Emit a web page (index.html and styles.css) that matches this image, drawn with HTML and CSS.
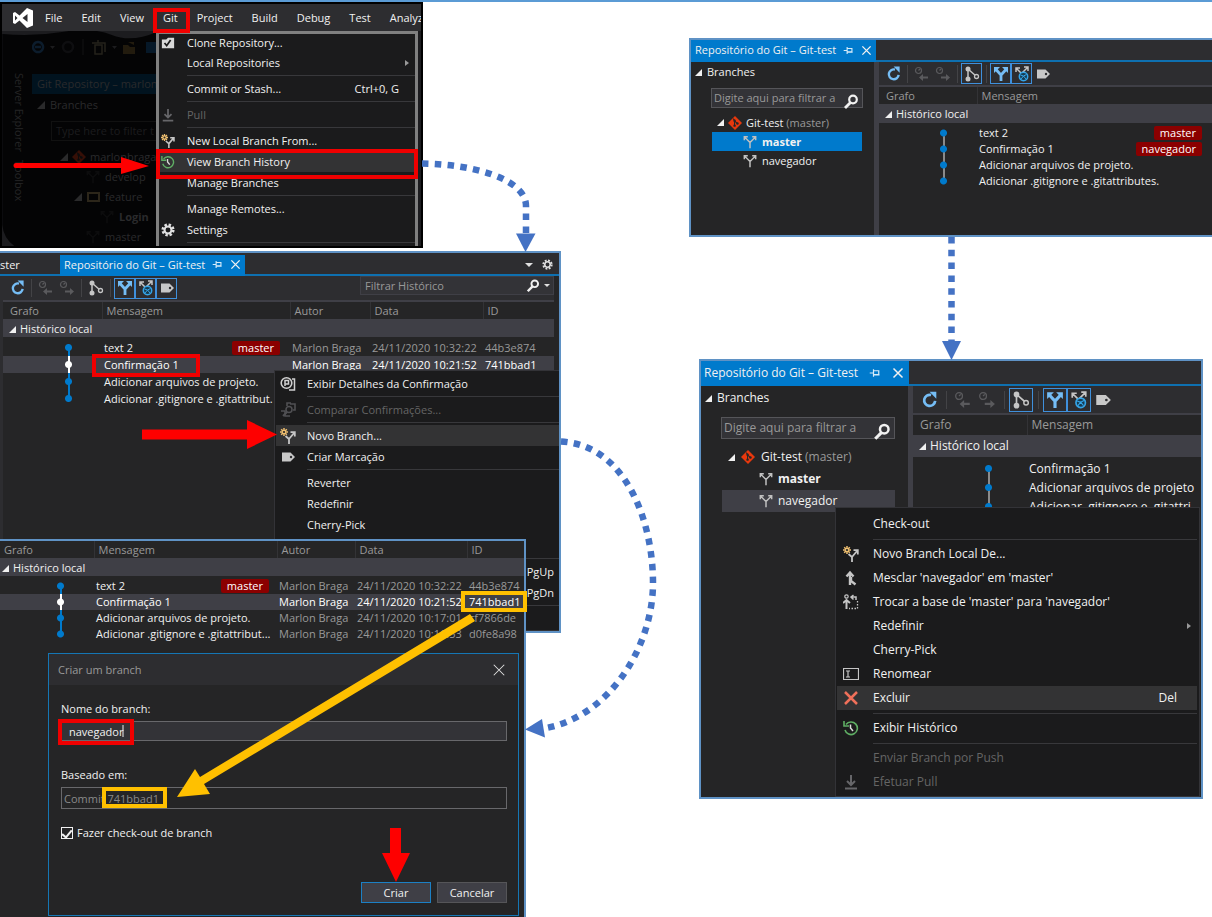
FILE: index.html
```html
<!DOCTYPE html>
<html lang="pt-BR">
<head>
<meta charset="utf-8">
<title>Git Branches</title>
<link rel="stylesheet" href="styles.css">
</head>
<body>
<svg class="defs" aria-hidden="true">
  <symbol id="refresh" viewBox="0 0 16 16"><path d="M12.6 8.8A4.9 4.9 0 1 1 9 3.6" fill="none" stroke="#75bdf5" stroke-width="2.4"/><path d="M7.6 0.6h6v6.2z" fill="#75bdf5"/></symbol>
  <symbol id="outgoing" viewBox="0 0 16 16"><g fill="none" stroke="#5a5a5d" stroke-width="1.2"><circle cx="4.5" cy="4.5" r="3"/><path d="M4.5 4.5L6 3"/></g><path d="M5 11.5L9 8v2.5h5v2H9V15z" fill="#5a5a5d"/></symbol>
  <symbol id="incoming" viewBox="0 0 16 16"><g fill="none" stroke="#5a5a5d" stroke-width="1.2"><circle cx="4.5" cy="4.5" r="3"/><path d="M4.5 4.5L6 3"/></g><path d="M15 11.5L11 8v2.5H6v2h5V15z" fill="#5a5a5d"/></symbol>
  <symbol id="graph" viewBox="0 0 16 16"><path d="M4 3v10M4 3l8 7" stroke="#c5c5c5" stroke-width="1.5"/><circle cx="4" cy="3" r="2.5" fill="#c5c5c5"/><circle cx="4" cy="13" r="2.5" fill="#c5c5c5"/><circle cx="12.5" cy="10.5" r="2" fill="#2d2d30" stroke="#c5c5c5" stroke-width="1.3"/></symbol>
  <symbol id="local" viewBox="0 0 16 16"><path d="M3 3.5l5 5.5v6M13 3.5L8 9" fill="none" stroke="#75bdf5" stroke-width="2.8"/><path d="M1 1h6L1 7zM15 1H9l6 6z" fill="#75bdf5"/></symbol>
  <symbol id="remote" viewBox="0 0 16 16"><path d="M2 6V2h4M2 2l5 5M10 1h4v4M14 1L8 7" fill="none" stroke="#c5c5c5" stroke-width="1.5"/><circle cx="9.5" cy="10.5" r="4.2" fill="#173c52" stroke="#35a5e8" stroke-width="1.5"/><path d="M6.5 9l3 1 3-1.5M7 13l2.500-3 2.500 3" stroke="#35a5e8" fill="none"/></symbol>
  <symbol id="tag" viewBox="0 0 16 16"><path d="M2 3.500h8.500L15 8l-4.500 4.500H2z" fill="#c8c8c8"/><circle cx="11" cy="8" r="1.200" fill="#2d2d30"/></symbol>
  <symbol id="pin" viewBox="0 0 16 16"><path d="M1 8h5M6 3v10M6 5h7v5H6M6 10.5h8" fill="none" stroke="#d6ecfa" stroke-width="1.6"/></symbol>
  <symbol id="close" viewBox="0 0 16 16"><path d="M2 2l12 12M14 2L2 14" stroke="currentColor" stroke-width="var(--stroke,2)"/></symbol>
  <symbol id="search" viewBox="0 0 16 16"><circle cx="10" cy="5.5" r="3.8" fill="none" stroke="#f1f1f1" stroke-width="2.2"/><path d="M7.5 8.5L2 14" stroke="#f1f1f1" stroke-width="2.8"/></symbol>
  <symbol id="gear" viewBox="0 0 16 16"><circle cx="8" cy="8" r="6" fill="none" stroke="#e0e0e0" stroke-width="3" stroke-dasharray="2.7 2.01"/><circle cx="8" cy="8" r="4" fill="none" stroke="#e0e0e0" stroke-width="2.4"/></symbol>
  <symbol id="expanded" viewBox="0 0 8 8"><path d="M8 0v8H0z" fill="#f1f1f1"/></symbol>
  <symbol id="git" viewBox="0 0 16 16"><path d="M8 0l8 8-8 8-8-8z" fill="#e8380d"/><path d="M6 3l1.5 2v6M7.500 5.500L10.500 8.500" stroke="#252526" stroke-width="1.2" fill="none"/><circle cx="7.500" cy="11" r="1.400" fill="#252526"/><circle cx="10.800" cy="8.500" r="1.400" fill="#252526"/><circle cx="7.500" cy="5.500" r="1.400" fill="#252526"/></symbol>
  <symbol id="branch" viewBox="0 0 16 16"><path d="M1.500 6V2H5.500M1.500 2L8 8.500V15M10.500 2h4v4M14.500 2L8 8.500" fill="none" stroke="currentColor" stroke-width="1.700"/></symbol>
  <symbol id="newbranch" viewBox="0 0 16 16"><path d="M4 0v8M0 4h8M1.200 1.200l5.600 5.600M6.800 1.200L1.200 6.800" stroke="#f0c070" stroke-width="1.500"/><circle cx="4" cy="4" r="1.100" fill="#252526"/><path d="M5.500 8L9 11M9 16v-5l5-6M10.500 4.200h4.300v4.300" fill="none" stroke="#c5c5c5" stroke-width="1.800"/></symbol>
  <symbol id="history" viewBox="0 0 16 16"><path d="M3 4.500A6.300 6.300 0 1 1 2 10M1 1v5h5" fill="none" stroke="#5fae64" stroke-width="1.600"/><path d="M7.500 4.500V8l2.500 3" fill="none" stroke="#dcdcdc" stroke-width="1.500"/></symbol>
  <symbol id="delete" viewBox="0 0 16 16"><path d="M2 2l12 12M14 2L2 14" stroke="#f0705a" stroke-width="2.500"/></symbol>
  <symbol id="rename" viewBox="0 0 16 16"><path d="M.5 2.500h15v11H.5zM3 5h4M3 11h4M5 5v6" fill="none" stroke="#c5c5c5" stroke-width="1.200"/></symbol>
  <symbol id="merge" viewBox="0 0 16 16"><path d="M7 15V3M3.500 6.500L7 2.500l3.500 4M12.500 14.500L8 11V7" fill="none" stroke="#c5c5c5" stroke-width="2.400"/></symbol>
  <symbol id="rebase" viewBox="0 0 16 16"><circle cx="3.500" cy="2.500" r="1.700" fill="none" stroke="#c5c5c5" stroke-width="1.200"/><path d="M3.500 15V6M0 9l3.500-3L7 9" fill="none" stroke="#c5c5c5" stroke-width="2"/><path d="M8 3h5v3M10.500 1L8 3l2.500 2.500" fill="none" stroke="#c5c5c5" stroke-width="1.500"/><path d="M14.500 7v7.500H6" fill="none" stroke="#c5c5c5" stroke-width="1.300" stroke-dasharray="1.500 1.500"/></symbol>
  <symbol id="pull" viewBox="0 0 16 16"><path d="M8 1v10M4 7l4 4 4-4M2 14.500h12" fill="none" stroke="#666669" stroke-width="2"/></symbol>
  <symbol id="clone" viewBox="0 0 16 16"><path d="M1 4h5l2-2h7v12H1z" fill="#d8d8d8"/><path d="M4 8l2.500 3L11 4.500" fill="none" stroke="#1b1b1c" stroke-width="2"/></symbol>
  <symbol id="details" viewBox="0 0 16 16"><circle cx="6.500" cy="7" r="5.300" fill="none" stroke="#d0d0d0" stroke-width="1.600"/><path d="M5 10V4.500h3.500V8H5M12 3h2.500v11H9" fill="none" stroke="#d0d0d0" stroke-width="1.500"/></symbol>
  <symbol id="compare" viewBox="0 0 16 16"><path d="M1 9h4v5h5M10 2h5v6h-2M7 4V1h4" fill="none" stroke="#505053" stroke-width="1.600"/><circle cx="9" cy="7.500" r="3" fill="none" stroke="#505053" stroke-width="1.500"/><path d="M7 10l-4 4" stroke="#505053" stroke-width="2"/></symbol>
  <symbol id="vs" viewBox="0 0 20 20"><path fill="#fff" fill-rule="evenodd" d="M14 0l6 2.500v15L14 20 6.500 12.500 2 16 0 15V5l2-1 4.500 3.500zM14.500 6L9.500 10l5 4zM2 7.500v5L4.500 10z"/></symbol>
</svg>

<main class="canvas">

  <section class="shot menu-shot" aria-label="Git menu">
    <nav class="menubar">
      <svg class="vs"><use href="#vs"/></svg>
      <button>File</button><button>Edit</button><button>View</button><button>Git</button><button>Project</button><button>Build</button><button>Debug</button><button>Test</button><button>Analyz</button>
    </nav>
    <div class="ide">
      <svg class="shade" viewBox="0 0 155 218"><path d="M0 3Q30 6 60 1T110 4T155 1V216H12Q1 208 0 195z" fill="#040405"/></svg>
      <div class="side"><span>Server Explorer</span><span>Toolbox</span></div>
      <div class="faded">
        <div class="faded-tools">
          <svg viewBox="0 0 130 16"><path d="M6 3a5 5 0 1 0 .1 0zM3 8h6" fill="none" stroke="#0c1c2c" stroke-width="2.500"/><path d="M18 7h5l-2.500 3zM80 7h5l-2.500 3z" fill="#1c1c1e"/><circle cx="36" cy="8" r="5" fill="none" stroke="#0e0e10" stroke-width="2.500"/><path d="M51 0v16" stroke="#131314"/><path d="M60 4h6v-3M63 6h7v9h-7z M66 4h7v9" fill="none" stroke="#24221b" stroke-width="1.500"/><path d="M91 6h5l2 2h5v7H91zM96 3h6v3" fill="#221b0e"/><path d="M114 3h13v11h-13z" fill="#061828"/></svg>
        </div>
        <p class="faded-tab">Git Repository – marlon</p>
        <p class="faded-head"><svg><use href="#expanded"/></svg>Branches</p>
        <p class="faded-input">Type here to filter t</p>
        <p class="lv1"><svg><use href="#expanded"/></svg><svg class="ic"><use href="#git"/></svg>marlonbraga</p>
        <p class="lv2"><svg class="ic"><use href="#branch"/></svg>develop</p>
        <p class="lv3"><svg><use href="#expanded"/></svg><i class="folder"></i>feature</p>
        <p class="lv4"><svg class="ic"><use href="#branch"/></svg><b>Login</b></p>
        <p class="lv2"><svg class="ic"><use href="#branch"/></svg>master</p>
      </div>
      <ul class="menu main-menu">
        <li><button><svg><use href="#clone"/></svg><span>Clone Repository...</span></button></li>
        <li><button><i></i><span>Local Repositories</span><b class="more"></b></button></li>
        <li class="sep"></li>
        <li><button><i></i><span>Commit or Stash...</span><kbd>Ctrl+0, G</kbd></button></li>
        <li class="sep"></li>
        <li><button disabled><svg><use href="#pull"/></svg><span>Pull</span></button></li>
        <li class="sep"></li>
        <li><button><svg><use href="#newbranch"/></svg><span>New Local Branch From...</span></button></li>
        <li><button class="hot"><svg><use href="#history"/></svg><span>View Branch History</span></button></li>
        <li><button><i></i><span>Manage Branches</span></button></li>
        <li class="sep"></li>
        <li><button><i></i><span>Manage Remotes...</span></button></li>
        <li><button><svg><use href="#gear"/></svg><span>Settings</span></button></li>
        <li class="sep"></li>
      </ul>
    </div>
  </section>

  <section class="shot history-shot" aria-label="Histórico">
    <header class="tabs">
      <span class="old-tab">ster</span>
      <div class="tab">Repositório do Git – Git-test <svg><use href="#pin"/></svg><svg><use href="#close"/></svg></div>
      <span class="tab-tools"><b class="down"></b><svg><use href="#gear"/></svg></span>
    </header>
    <div class="pane">
      <div class="toolbar">
        <button aria-label="Atualizar"><svg><use href="#refresh"/></svg></button><i></i>
        <button aria-label="Saída"><svg><use href="#outgoing"/></svg></button><button aria-label="Entrada"><svg><use href="#incoming"/></svg></button><i></i>
        <button aria-label="Grafo"><svg><use href="#graph"/></svg></button><i></i>
        <button class="on" aria-label="Locais"><svg><use href="#local"/></svg></button><button class="on" aria-label="Remotos"><svg><use href="#remote"/></svg></button><button class="on" aria-label="Marcações"><svg><use href="#tag"/></svg></button>
        <label class="hist-filter"><input type="text" placeholder="Filtrar Histórico" aria-label="Filtrar Histórico"><svg><use href="#search"/></svg><b class="down"></b></label>
      </div>
      <table class="log">
        <colgroup><col class="c1"><col class="c2"><col class="c3"><col class="c4"><col></colgroup>
        <thead><tr><th>Grafo</th><th>Mensagem</th><th>Autor</th><th>Data</th><th>ID</th></tr></thead>
        <tbody>
          <tr class="group"><td colspan="5"><svg><use href="#expanded"/></svg>Histórico local</td></tr>
          <tr><td><i class="node first"></i></td><td><div>text 2 <mark>master</mark></div></td><td>Marlon Braga</td><td>24/11/2020 10:32:22</td><td>44b3e874</td></tr>
          <tr class="sel"><td><i class="node"></i></td><td><div>Confirmação 1</div></td><td>Marlon Braga</td><td>24/11/2020 10:21:52</td><td>741bbad1</td></tr>
          <tr><td><i class="node"></i></td><td><div>Adicionar arquivos de projeto.</div></td><td></td><td></td><td></td></tr>
          <tr><td><i class="node last"></i></td><td><div>Adicionar .gitignore e .gitattribut.</div></td><td></td><td></td><td></td></tr>
        </tbody>
      </table>
    </div>
    <ul class="menu commit-menu">
      <li><button><svg><use href="#details"/></svg><span>Exibir Detalhes da Confirmação</span></button></li>
      <li class="sep"></li>
      <li><button disabled><svg><use href="#compare"/></svg><span>Comparar Confirmações...</span></button></li>
      <li class="sep"></li>
      <li><button class="hot"><svg><use href="#newbranch"/></svg><span>Novo Branch...</span></button></li>
      <li><button><svg><use href="#tag"/></svg><span>Criar Marcação</span></button></li>
      <li class="sep"></li>
      <li><button><i></i><span>Reverter</span></button></li>
      <li><button><i></i><span>Redefinir</span></button></li>
      <li><button><i></i><span>Cherry-Pick</span></button></li>
      <li class="blank"></li>
      <li class="sep"></li>
      <li><button><i></i><span></span><kbd>PgUp</kbd></button></li>
      <li><button><i></i><span></span><kbd>PgDn</kbd></button></li>
      <li class="sep"></li>
    </ul>
  </section>

  <section class="shot create-shot" aria-label="Criar um branch">
    <table class="log">
      <colgroup><col class="c1"><col class="c2"><col class="c3"><col class="c4"><col></colgroup>
      <thead><tr><th>Grafo</th><th>Mensagem</th><th>Autor</th><th>Data</th><th>ID</th></tr></thead>
      <tbody>
        <tr class="group"><td colspan="5"><svg><use href="#expanded"/></svg>Histórico local</td></tr>
        <tr><td><i class="node first"></i></td><td><div>text 2 <mark>master</mark></div></td><td>Marlon Braga</td><td>24/11/2020 10:32:22</td><td>44b3e874</td></tr>
        <tr class="sel"><td><i class="node"></i></td><td><div>Confirmação 1</div></td><td>Marlon Braga</td><td>24/11/2020 10:21:52</td><td>741bbad1</td></tr>
        <tr><td><i class="node"></i></td><td><div>Adicionar arquivos de projeto.</div></td><td>Marlon Braga</td><td>24/11/2020 10:17:01</td><td>cf7866de</td></tr>
        <tr><td><i class="node last"></i></td><td><div>Adicionar .gitignore e .gitattribut...</div></td><td>Marlon Braga</td><td>24/11/2020 10:16:53</td><td>d0fe8a98</td></tr>
      </tbody>
    </table>
    <form class="dialog">
      <header><span>Criar um branch</span><button type="button" aria-label="Fechar"><svg><use href="#close"/></svg></button></header>
      <div class="fields">
        <label for="name">Nome do branch:</label>
        <input id="name" type="text" value="navegador">
        <label for="base">Baseado em:</label>
        <input id="base" type="text" value="Commit 741bbad1" disabled>
        <label class="check"><input type="checkbox" checked>Fazer check-out de branch</label>
        <div class="actions"><button type="button" class="primary">Criar</button><button type="button">Cancelar</button></div>
      </div>
    </form>
  </section>

  <section class="shot repo-shot" aria-label="Repositório com dois branches">
    <header class="tabs">
      <div class="tab">Repositório do Git – Git-test <svg><use href="#pin"/></svg><svg><use href="#close"/></svg></div>
    </header>
    <div class="split">
      <aside>
        <h2><svg><use href="#expanded"/></svg>Branches</h2>
        <label class="filter"><input type="text" placeholder="Digite aqui para filtrar a" aria-label="Filtrar branches"><svg><use href="#search"/></svg></label>
        <ul class="tree">
          <li class="root"><svg class="tri"><use href="#expanded"/></svg><svg class="logo"><use href="#git"/></svg><span>Git-test <em>(master)</em></span></li>
          <li class="active"><svg><use href="#branch"/></svg><b>master</b></li>
          <li><svg><use href="#branch"/></svg>navegador</li>
        </ul>
      </aside>
      <div class="pane">
        <div class="toolbar">
          <button aria-label="Atualizar"><svg><use href="#refresh"/></svg></button><i></i>
          <button aria-label="Saída"><svg><use href="#outgoing"/></svg></button><button aria-label="Entrada"><svg><use href="#incoming"/></svg></button><i></i>
          <button class="on" aria-label="Grafo"><svg><use href="#graph"/></svg></button><i></i>
          <button class="on" aria-label="Locais"><svg><use href="#local"/></svg></button><button class="on" aria-label="Remotos"><svg><use href="#remote"/></svg></button><button aria-label="Marcações"><svg><use href="#tag"/></svg></button>
        </div>
        <table class="log">
          <colgroup><col class="c1"><col></colgroup>
          <thead><tr><th>Grafo</th><th>Mensagem</th></tr></thead>
          <tbody>
            <tr class="group"><td colspan="2"><svg><use href="#expanded"/></svg>Histórico local</td></tr>
            <tr><td><i class="node first"></i></td><td><div>text 2 <mark>master</mark></div></td></tr>
            <tr><td><i class="node"></i></td><td><div>Confirmação 1 <mark>navegador</mark></div></td></tr>
            <tr><td><i class="node"></i></td><td><div>Adicionar arquivos de projeto.</div></td></tr>
            <tr><td><i class="node last"></i></td><td><div>Adicionar .gitignore e .gitattributes.</div></td></tr>
          </tbody>
        </table>
      </div>
    </div>
  </section>

  <section class="shot delete-shot" aria-label="Excluir branch">
    <header class="tabs">
      <div class="tab">Repositório do Git – Git-test <svg><use href="#pin"/></svg><svg><use href="#close"/></svg></div>
    </header>
    <div class="split">
      <aside>
        <h2><svg><use href="#expanded"/></svg>Branches</h2>
        <label class="filter"><input type="text" placeholder="Digite aqui para filtrar a" aria-label="Filtrar branches"><svg><use href="#search"/></svg></label>
        <ul class="tree">
          <li class="root"><svg class="tri"><use href="#expanded"/></svg><svg class="logo"><use href="#git"/></svg><span>Git-test <em>(master)</em></span></li>
          <li><svg><use href="#branch"/></svg><b>master</b></li>
          <li class="picked"><svg><use href="#branch"/></svg>navegador</li>
        </ul>
      </aside>
      <div class="pane">
        <div class="toolbar">
          <button aria-label="Atualizar"><svg><use href="#refresh"/></svg></button><i></i>
          <button aria-label="Saída"><svg><use href="#outgoing"/></svg></button><button aria-label="Entrada"><svg><use href="#incoming"/></svg></button><i></i>
          <button class="on" aria-label="Grafo"><svg><use href="#graph"/></svg></button><i></i>
          <button class="on" aria-label="Locais"><svg><use href="#local"/></svg></button><button class="on" aria-label="Remotos"><svg><use href="#remote"/></svg></button><button aria-label="Marcações"><svg><use href="#tag"/></svg></button>
        </div>
        <table class="log">
          <colgroup><col class="c1"><col></colgroup>
          <thead><tr><th>Grafo</th><th>Mensagem</th></tr></thead>
          <tbody>
            <tr class="group"><td colspan="2"><svg><use href="#expanded"/></svg>Histórico local</td></tr>
            <tr><td><i class="node first"></i></td><td><div>Confirmação 1</div></td></tr>
            <tr><td><i class="node"></i></td><td><div>Adicionar arquivos de projeto</div></td></tr>
            <tr><td><i class="node last"></i></td><td><div>Adicionar .gitignore e .gitattri</div></td></tr>
          </tbody>
        </table>
      </div>
    </div>
    <ul class="menu branch-menu">
      <li><button><i></i><span>Check-out</span></button></li>
      <li class="sep"></li>
      <li><button><svg><use href="#newbranch"/></svg><span>Novo Branch Local De...</span></button></li>
      <li><button><svg><use href="#merge"/></svg><span>Mesclar 'navegador' em 'master'</span></button></li>
      <li><button><svg><use href="#rebase"/></svg><span>Trocar a base de 'master' para 'navegador'</span></button></li>
      <li><button><i></i><span>Redefinir</span><b class="more"></b></button></li>
      <li><button><i></i><span>Cherry-Pick</span></button></li>
      <li><button><svg><use href="#rename"/></svg><span>Renomear</span></button></li>
      <li><button class="hot"><svg><use href="#delete"/></svg><span>Excluir</span><kbd>Del</kbd></button></li>
      <li class="sep"></li>
      <li><button><svg><use href="#history"/></svg><span>Exibir Histórico</span></button></li>
      <li class="sep"></li>
      <li><button disabled><i></i><span>Enviar Branch por Push</span></button></li>
      <li><button disabled><svg><use href="#pull"/></svg><span>Efetuar Pull</span></button></li>
    </ul>
  </section>

  <svg class="notes" width="1212" height="917" viewBox="0 0 1212 917" aria-hidden="true">
    <g fill="none" stroke="#4472c4" stroke-width="6.500" stroke-dasharray="6.500 6.300">
      <path d="M422 163.500C470 164 526 178 526 206V236"/>
      <path d="M561 441.500C625 445 653 520 653 583S610 716 546 728"/>
      <path d="M951.500 237V342"/>
    </g>
    <g fill="#4472c4"><path d="M516 233.500h19.500L525.500 252z"/><path d="M525 729.500L542 719l3 18.500z"/><path d="M942 341h19l-9.500 19z"/></g>
    <g fill="none" stroke="#f00000" stroke-width="4">
      <rect x="155" y="10" width="33" height="21"/>
      <rect x="158" y="151" width="258" height="26"/>
      <rect x="94" y="356" width="104" height="19"/>
      <rect x="60" y="721" width="72" height="22"/>
    </g>
    <path d="M123 725v12" stroke="#f1f1f1"/>
    <g fill="#fe0000"><path d="M16 163h105v-6l28 9-28 8v-6H16a2 2 0 0 1 0-5z"/><path d="M142 429.500h105V420l30 14.500L247 449v-9.500H142z"/><path d="M390 828h11v25h9l-14 29-14-29h8z"/></g>
    <g fill="none" stroke="#ffc000" stroke-width="4"><rect x="463" y="593" width="62" height="17"/><rect x="104" y="789" width="61" height="17"/></g>
    <path d="M470 614l5 7L204 784l6 10-33 3 18-28 5 8z" fill="#ffc000"/>
  </svg>
</main>
</body>
</html>
```
FILE: styles.css
```css
* { box-sizing: border-box; }
body { margin: 0; background: #fff; font: 11px/16px "Open Sans", "Noto Sans", sans-serif; color: #f1f1f1; }
button, input { font: inherit; color: inherit; }
button { background: none; border: 0; padding: 0; }
ul, p, h2 { margin: 0; padding: 0; list-style: none; }
kbd, em, i { font-family: inherit; font-style: normal; }
svg { flex: none; }
.defs { position: absolute; width: 0; height: 0; }

.canvas { position: relative; min-height: 100vh; overflow: hidden; border-top: 2px solid #5b9bd5; }
.notes { position: absolute; left: 0; top: -2px; pointer-events: none; }

.shot {
  --icon: 16px; --btn: 21px; --row: 17px; --group: 20px; --line: #007acc; --dot: 61px; --c1: 99px;
  position: absolute; overflow: hidden; border: 2px solid #5f92c5; background: #252526;
}

/* Tabs */
.tabs { display: flex; align-items: stretch; height: 22px; background: #2d2d30; border-bottom: 2px solid #0e70b0; }
.tab { display: flex; align-items: center; gap: 7px; padding: 0 4px; background: #007acc; box-shadow: 0 2px #007acc; white-space: nowrap; }
.tab svg { width: 11px; height: 11px; }
.tab-tools { display: flex; align-items: center; gap: 9px; margin-left: auto; padding-right: 6px; }
.tab-tools svg { width: 11px; height: 11px; }
.down { border: 4px solid transparent; border-top-color: #e0e0e0; border-bottom: 0; }

/* Toolbar */
.toolbar { display: flex; align-items: center; height: 26px; padding-left: 4px; background: #2d2d30; border-bottom: 2px solid #3f3f46; }
.toolbar button { display: grid; place-items: center; width: var(--btn); height: var(--btn); border: 1px solid transparent; }
.toolbar button.on { border-color: #3f90dc; }
.toolbar svg { width: var(--icon); height: var(--icon); }
.toolbar > i { width: 1px; height: 18px; margin: 0 3px; background: #434346; }
.toolbar > i ~ i { margin-left: 4px; }
.hist-filter { display: flex; align-self: start; align-items: center; width: 194px; height: 19px; margin-left: auto; padding-right: 3px; background: #333337; border: 1px solid #3f3f46; }
.hist-filter input { flex: 1; min-width: 0; padding: 0 4px; background: none; border: 0; }
.hist-filter svg { width: 14px; height: 14px; margin-right: 4px; }
.hist-filter .down { border-width: 3px; border-bottom: 0; }
input::placeholder { color: #999; opacity: 1; }

/* Commit table */
.log { width: 100%; table-layout: fixed; border-collapse: collapse; white-space: nowrap; }
.log .c1 { width: var(--c1); }
.log th { height: 17px; padding: 0 0 0 4px; text-align: left; font-weight: 400; line-height: 16px; color: #999; border-left: 1px solid #333336; }
.log th:first-child { padding-left: 7px; border: 0; }
.log td { height: var(--row); padding: 0 0 0 2px; line-height: 16px; color: #999; }
.log td:first-child { padding: 0; }
.log td:nth-child(2) { color: #f1f1f1; }
.log td > div { display: flex; justify-content: space-between; align-items: center; padding-right: 10px; }
.log .sel td { background: #3f3f46; color: #fff; }
.log .group td { height: var(--group); padding-left: 6px; line-height: 17px; color: #f1f1f1; background: #3f3f46; border-bottom: 2px solid #252526; }
.group svg { width: 7px; height: 7px; margin-right: 4px; }
mark { padding: 0 6px; line-height: 14px; color: #fff; background: #8b0000; border-radius: 2px; }
.node { display: block; width: 9px; height: var(--row); margin-left: var(--dot); background: radial-gradient(circle, #007acc 3px, transparent 4px), linear-gradient(var(--line), var(--line)) center / 2px 100% no-repeat; }
.node.first { background: radial-gradient(circle, #007acc 3px, transparent 4px), linear-gradient(var(--line), var(--line)) center bottom / 2px 50% no-repeat; }
.node.last { background: radial-gradient(circle, #007acc 3px, transparent 4px), linear-gradient(var(--line), var(--line)) center top / 2px 50% no-repeat; }
.sel .node { background: radial-gradient(circle, #fff 3px, transparent 4px), linear-gradient(#fff, #fff) center / 2px 100% no-repeat; }

/* Menus */
.menu { position: absolute; background: #1b1b1c; --item: 21px; --gutter: 31px; --sep: 5px; }
.menu button { display: grid; grid-template-columns: var(--gutter) 1fr auto; align-items: center; width: 100%; height: var(--item); text-align: left; white-space: nowrap; }
.menu svg { width: var(--icon); height: var(--icon); margin-left: 4px; }
.menu .hot { background: #333334; }
.menu button:disabled { color: #656565; }
.menu .sep { height: var(--sep); margin-left: var(--gutter); background: linear-gradient(#38383b, #38383b) center / 100% 1px no-repeat; }
.menu .blank { height: var(--item); }
.more { border: 3px solid transparent; border-left: 4px solid #999; border-right: 0; margin-right: 6px; }

/* Git menu window */
.menu-shot { left: 0; top: 0; width: 423px; height: 246px; border-color: #000; background: #1c1c1f; }
.menubar { display: flex; align-items: center; gap: 19px; height: 27px; padding: 1px 0 0 11px; background: #2d2d30; }
.vs { width: 20px; height: 20px; margin-right: -7px; }
.ide { position: relative; display: flex; height: 217px; }
.shade { position: absolute; width: 155px; height: 217px; }
.side { position: relative; display: flex; gap: 8px; width: 30px; padding: 42px 0 0 0; writing-mode: vertical-rl; align-items: flex-start; justify-content: flex-start; line-height: 26px; color: #242425; }
.faded { position: relative; width: 128px; color: #2a2a2c; white-space: nowrap; }
.faded p { display: flex; align-items: center; gap: 5px; height: 20px; }
.faded svg { width: 8px; height: 8px; opacity: .16; }
.faded svg.ic { width: 14px; height: 14px; opacity: .22; }
.faded .faded-tools svg { display: block; width: 130px; height: 16px; margin: 8px 0 19px; opacity: 1; }
.faded .faded-tab { padding-left: 5px; background: #01131f; }
.faded .faded-head { height: 22px; padding-left: 5px; }
.faded .faded-input { margin: 5px 0 6px 19px; padding-left: 4px; border: 1px solid #111; color: #1c1c1e; }
.faded .lv1 { padding-left: 28px; gap: 4px; }
.faded .lv2 { padding-left: 54px; }
.faded .lv3 { padding-left: 42px; }
.faded .lv4 { padding-left: 68px; }
.folder { width: 13px; height: 10px; border: 2px solid #2c261a; }
.main-menu { --gutter: 28px; left: 154px; right: 3px; top: 0; height: 230px; border: 3px solid #808080; border-bottom: 0; }
.main-menu svg { margin-left: 2px; width: 14px; height: 14px; }
.main-menu li:first-child button { height: 18px; }
.main-menu kbd { padding-right: 16px; }

/* History window */
.history-shot { --group: 19px; left: 0; top: 249px; width: 561px; height: 382px; border-left: 0; }
.history-shot .tabs { height: 23px; padding-top: 2px; align-items: stretch; line-height: 19px; }
.old-tab { width: 60px; }
.history-shot .pane { height: 100%; margin-right: 5px; border-left: 3px solid #2d2d30; }
.history-shot .c2 { width: 188px; }
.history-shot .c3 { width: 80px; }
.history-shot .c4 { width: 113px; }
.commit-menu { left: 274px; right: 0; top: 117px; bottom: 0; padding: 2px 0 0 1px; border: 1px solid #333337; border-right: 0; }
.commit-menu kbd { padding-right: 5px; }

/* Create window */
.create-shot { --row: 16px; --group: 19px; --dot: 56px; --c1: 94px; left: 0; top: 537px; bottom: 0; width: 526px; border-left: 0; border-bottom: 0; }
.create-shot .c2 { width: 183px; }
.create-shot .c3 { width: 78px; }
.create-shot .c4 { width: 112px; }
.create-shot .log th:first-child { padding-left: 4px; }
.create-shot .log .group td { padding-left: 2px; }
.create-shot .log td > div { padding-right: 8px; }
.dialog { margin: 11px 5px 0 48px; height: 263px; border: 1px solid #1576b4; }
.dialog header { display: flex; align-items: center; justify-content: space-between; height: 31px; padding: 0 12px 0 9px; background: #2d2d30; color: #999; }
.dialog header svg { display: block; --stroke: 1.2; width: 14px; height: 14px; color: #e0e0e0; }
.fields { display: flex; flex-direction: column; padding: 16px 11px 0 12px; }
.fields > label { height: 20px; }
.fields input[type=text] { width: 100%; height: 20px; margin-bottom: 26px; padding: 0 7px; background: #333337; border: 1px solid #68686b; }
.fields #base { height: 22px; margin-bottom: 14px; padding: 0 2px; background: #252526; color: #8a8a8a; }
.check { display: flex; align-items: center; gap: 4px; }
.check input { appearance: none; display: grid; place-items: center; width: 12px; height: 12px; margin: 0; border: 1px solid #f1f1f1; }
.check input:checked::after { content: ""; width: 4px; height: 8px; border: solid #f1f1f1; border-width: 0 2px 2px 0; transform: rotate(40deg); }
.actions { display: flex; justify-content: flex-end; gap: 6px; margin-top: 39px; }
.actions button { width: 70px; height: 21px; background: #3f3f46; border: 1px solid #555558; }
.actions .primary { border-color: #1c80c4; }

/* Repository windows */
.split { display: grid; grid-template-columns: var(--left) 1fr; height: 100%; }
.split aside { border-right: 5px solid #3f3f46; }
.split .pane { min-width: 0; }
.split h2 { display: flex; align-items: center; gap: 5px; padding-left: 4px; font-size: inherit; font-weight: 400; }
.split h2 svg, .tri { width: 7px; height: 7px; }
.filter { display: flex; align-items: center; background: #333337; border: 1px solid #555559; }
.filter input { flex: 1; min-width: 0; padding: 0 2px; background: none; border: 0; }
.filter svg { align-self: end; width: var(--icon); height: var(--icon); margin: 0 3px -3px 0; }
.tree li { display: flex; align-items: center; }
.tree svg { width: 14px; height: 14px; color: #c0c0c0; }
.tree .tri { width: 7px; height: 7px; }
.tree em { color: #999; }
.tree .active { background: #007acc; }
.tree .picked { background: #3f3f46; }

.repo-shot { --left: 188px; --row: 16px; --dot: 60px; --c1: 98px; --line: #8a8a8a; left: 689px; right: -2px; top: 36px; height: 199px; }
.repo-shot .toolbar { height: 25px; }
.repo-shot h2 { height: 20px; }
.repo-shot .filter { width: 152px; height: 20px; margin: 6px 0 5px 20px; }
.repo-shot .tree { margin-left: 21px; width: 150px; }
.repo-shot .tree li { height: 19px; padding-left: 31px; gap: 5px; }
.repo-shot .tree .root { padding-left: 5px; gap: 4px; }

.delete-shot { --icon: 18px; --btn: 24px; --group: 23px; --left: 212px; --row: 19px; --dot: 71px; --c1: 114px; --line: #8a8a8a; left: 699px; top: 357px; width: 504px; height: 440px; font-size: 12px; }
.delete-shot .tabs { height: 25px; }
.delete-shot .tab { gap: 11px; padding: 0 5px 0 3px; }
.delete-shot .tab svg { width: 12px; height: 12px; }
.delete-shot .toolbar { height: 29px; padding-left: 5px; }
.delete-shot .toolbar i { margin: 0 4px; }
.delete-shot .toolbar i ~ i { margin-left: 5px; }
.delete-shot .log th { height: 20px; }
.delete-shot .group td { line-height: 20px; }
.delete-shot h2 { height: 24px; }
.delete-shot .filter { width: 174px; height: 22px; margin: 7px 0 7px 20px; }
.delete-shot .tree { margin-left: 21px; width: 173px; }
.delete-shot .tree li { height: 22px; padding-left: 37px; gap: 5px; }
.delete-shot .tree .root { padding-left: 6px; gap: 6px; }
.branch-menu { --item: 24px; --gutter: 36px; --sep: 6px; left: 134px; right: 1px; top: 146px; bottom: 0; padding: 4px 2px 0 1px; border: 1px solid #333337; }
.branch-menu svg { width: 16px; height: 16px; margin-left: 6px; }
.branch-menu kbd { padding-right: 20px; }
```
